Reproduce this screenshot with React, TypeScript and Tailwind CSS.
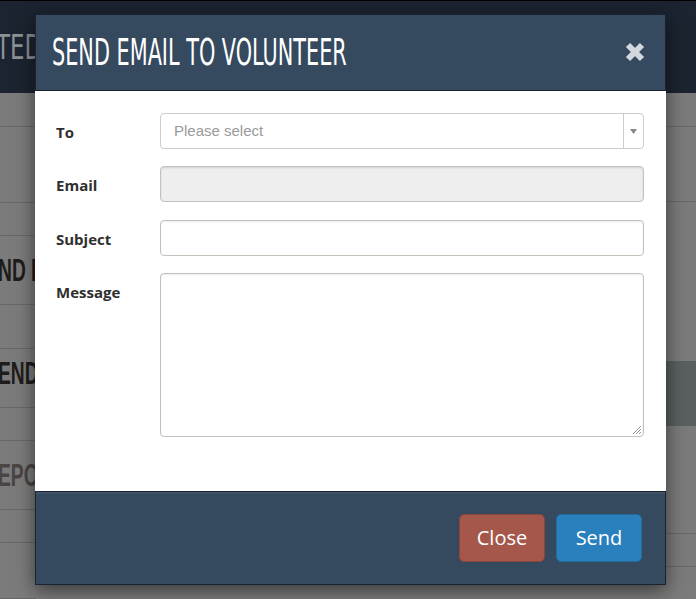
import React from "react";

const leftRows = [
  { h: 34 },
  { h: 76 },
  { h: 33 },
  { h: 69, text: "ND E", tone: "text-[#1f1d1c]", shift: "" },
  { h: 44 },
  { h: 59, text: "END", tone: "text-[#1f1d1c]", shift: "-mt-[10px]" },
  { h: 33 },
  { h: 69, text: "EPO", tone: "text-[#4a4442]", shift: "" },
  { h: 33 },
  { h: 56 },
];

function CloseIcon() {
  return (
    <svg width="22" height="22" viewBox="0 0 22 22">
      <path
        d="M4 4 L18 18 M18 4 L4 18"
        stroke="#d3d8de"
        strokeWidth="6"
        strokeLinecap="butt"
      />
    </svg>
  );
}

function Field({ label, children }: { label: string; children: React.ReactNode }) {
  return (
    <div className="flex items-start">
      <label className="w-[104px] shrink-0 pt-[8px] font-['Open_Sans',sans-serif] text-[15px] font-bold text-[#2f2f2f]">
        {label}
      </label>
      {children}
    </div>
  );
}

export default function App() {
  return (
    <div className="relative h-[599px] w-[696px] overflow-hidden bg-[#7b7b7b]">
      {/* page under the overlay */}
      <div className="h-[93px] border-t border-black bg-[#1b2430]">
        <div className="pt-[29px] font-['Liberation_Sans_Narrow','DejaVu_Sans_Condensed',sans-serif] text-[34px] leading-none text-[#8d9298]">
          <span className="inline-block origin-left scale-x-[0.75] -translate-x-[4px]">TED</span>
        </div>
      </div>
      <div className="flex">
        <div className="w-[36px]">
          {leftRows.map((r, i) => (
            <div
              key={i}
              style={{ height: r.h }}
              className="flex items-center overflow-hidden border-b border-[#686868] bg-[#7b7b7b]"
            >
              {r.text && (
                <span
                  className={`inline-block origin-left -translate-x-[2px] scale-x-[0.62] whitespace-nowrap font-['Liberation_Sans','DejaVu_Sans',sans-serif] text-[31px] font-bold leading-none ${r.tone} ${r.shift}`}
                >
                  {r.text}
                </span>
              )}
            </div>
          ))}
        </div>
        <div className="flex-1" />
        <div className="w-[30px]">
          <div className="h-[34px] border-b border-[#686868]" />
          <div className="h-[75px] border-b border-[#686868]" />
          <div className="h-[159px]" />
          <div className="h-[65px] bg-[#59605f]" />
          <div className="h-[108px] border-b border-[#686868]" />
          <div className="h-[33px] border-b border-[#686868]" />
        </div>
      </div>

      {/* modal */}
      <div className="absolute left-[35px] top-[14px] w-[631px] shadow-[0_5px_18px_rgba(0,0,0,0.55)]">
        <div className="flex h-[77px] items-center justify-between border border-[#1a2431] bg-[#35495f] pl-[16px] pr-[19px]">
          <h2 className="-mt-[1px] font-['Liberation_Sans_Narrow','DejaVu_Sans_Condensed','Liberation_Sans',sans-serif] text-[37px] font-normal leading-none text-white">
            <span className="inline-block origin-left scale-x-[0.625] whitespace-nowrap">
              SEND EMAIL TO VOLUNTEER
            </span>
          </h2>
          <button type="button" className="-mt-[2px]">
            <CloseIcon />
          </button>
        </div>

        <div className="flex flex-col bg-white pb-[54px] pl-[21px] pr-[22px] pt-[22px]">
          <Field label="To">
            <div className="flex h-[36px] flex-1 items-center rounded-[4px] border border-[#cccccc] bg-white">
              <span className="flex-1 pl-[13px] font-['Liberation_Sans',Arial,sans-serif] text-[15px] text-[#9a9a9a]">
                Please select
              </span>
              <div className="flex h-full w-[20px] items-center justify-center border-l border-[#cccccc]">
                <svg width="7" height="5" viewBox="0 0 7 5">
                  <path d="M0 0 L7 0 L3.5 5 Z" fill="#888" />
                </svg>
              </div>
            </div>
          </Field>
          <div className="mt-[17px]">
            <Field label="Email">
              <div className="h-[36px] flex-1 rounded-[4px] border border-[#c4c1bb] bg-[#eeeeee] shadow-[inset_0_1px_2px_rgba(0,0,0,0.12)]" />
            </Field>
          </div>
          <div className="mt-[18px]">
            <Field label="Subject">
              <div className="h-[36px] flex-1 rounded-[4px] border border-[#c4c1bb] bg-white shadow-[inset_0_1px_2px_rgba(0,0,0,0.08)]" />
            </Field>
          </div>
          <div className="mt-[17px]">
            <Field label="Message">
              <div className="relative h-[164px] flex-1 rounded-[4px] border border-[#c4c1bb] bg-white shadow-[inset_0_1px_2px_rgba(0,0,0,0.08)]">
                <svg
                  className="absolute bottom-[1px] right-[1px]"
                  width="10"
                  height="10"
                  viewBox="0 0 10 10"
                >
                  <path d="M9 1 L1 9 M9 4 L4 9 M9 7 L7 9" stroke="#9a9a9a" strokeWidth="1" />
                </svg>
              </div>
            </Field>
          </div>
        </div>

        <div className="flex h-[94px] items-center justify-end gap-[11px] border border-[#1a2431] bg-[#35495f] pr-[23px] shadow-[inset_0_2px_2px_rgba(255,255,255,0.06)]">
          <button
            type="button"
            className="h-[48px] w-[86px] rounded-[5px] border border-[#8a443b] bg-[#a5574c] font-['Open_Sans',sans-serif] text-[20px] text-white"
          >
            Close
          </button>
          <button
            type="button"
            className="h-[48px] w-[86px] rounded-[5px] border border-[#226b9f] bg-[#2a7fbd] font-['Open_Sans',sans-serif] text-[20px] text-white"
          >
            Send
          </button>
        </div>
      </div>
    </div>
  );
}
